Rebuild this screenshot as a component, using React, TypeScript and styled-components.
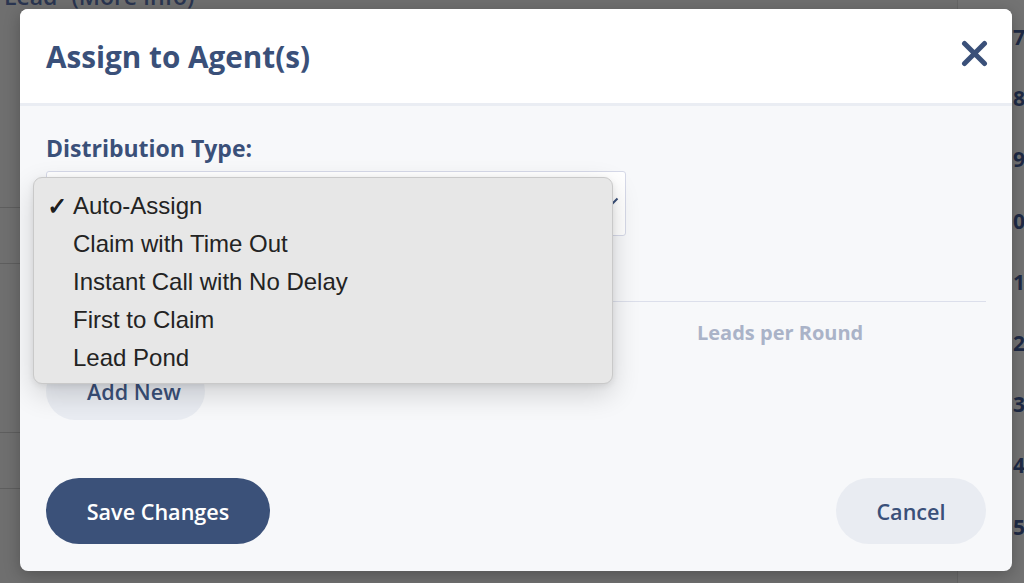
import React from 'react';
import styled, { createGlobalStyle } from 'styled-components';

const NAVY = '#3a5079';

const Global = createGlobalStyle`
  html, body { margin: 0; padding: 0; }
  body {
    width: 1024px;
    height: 583px;
    overflow: hidden;
    background: #6f6f6f;
    font-family: "Open Sans", "Noto Sans", sans-serif;
  }
`;

const Page = styled.div`
  position: relative;
  width: 1024px;
  height: 583px;
  overflow: hidden;
  background: #6f6f6f;
  display: grid;
  grid-template-columns: 957px 67px;
`;

const BgMain = styled.div`
  display: flex;
  flex-direction: column;
`;

const BgTitle = styled.div`
  margin: -20px 0 0 4px;
  height: 24px;
  font-size: 23px;
  font-weight: 600;
  color: #2a3550;
  white-space: nowrap;
  span { margin-left: 14px; }
`;

const BgRow = styled.div<{ $h: number }>`
  height: ${p => p.$h}px;
  border-bottom: 1px solid #5e5e5e;
  width: 20px;
`;

const BgSide = styled.div`
  border-left: 1px solid #666;
  background: #737373;
  display: flex;
  flex-direction: column;
  padding: 24px 0 0 55px;
`;

const BgNum = styled.div`
  height: 61.2px;
  font-size: 21px;
  font-weight: 700;
  color: #1e2a45;
  line-height: 26px;
`;

const Modal = styled.div`
  position: absolute;
  left: 20px;
  top: 9px;
  width: 992px;
  height: 562px;
  border-radius: 8px;
  overflow: hidden;
  background: #f7f8fa;
  box-shadow: 0 4px 16px rgba(0, 0, 0, 0.25);
  display: flex;
  flex-direction: column;
`;

const Header = styled.div`
  height: 94px;
  flex: none;
  background: #ffffff;
  border-bottom: 3px solid #eaedf3;
  display: flex;
  align-items: center;
  justify-content: space-between;
  padding: 0 24px 0 26px;
`;

const Title = styled.h2`
  margin: 0;
  font-size: 29.7px;
  font-weight: 700;
  color: ${NAVY};
`;

const CloseButton = styled.button`
  border: none;
  background: none;
  padding: 0;
  width: 27px;
  height: 27px;
  display: flex;
  align-items: center;
  justify-content: center;
  margin-top: -6px;
`;

const Body = styled.div`
  flex: 1;
  display: flex;
  flex-direction: column;
  padding: 28px 26px 27px;
`;

const Label = styled.div`
  font-size: 23px;
  font-weight: 700;
  line-height: 28px;
  color: ${NAVY};
`;

const SelectBox = styled.div`
  position: relative;
  margin-top: 9px;
  width: 580px;
  height: 65px;
  box-sizing: border-box;
  border: 1px solid #d6d9e8;
  border-radius: 3px;
  background: #ffffff;
`;

const Chevron = styled.svg`
  position: absolute;
  right: 6px;
  top: 25px;
`;

const Menu = styled.ul`
  position: absolute;
  left: -14px;
  top: 5px;
  width: 580px;
  height: 207px;
  box-sizing: border-box;
  margin: 0;
  padding: 9px 0 0;
  list-style: none;
  background: #e7e7e7;
  border: 1px solid #c9c9c9;
  border-radius: 9px;
  box-shadow: 0 10px 28px rgba(0, 0, 0, 0.16), 0 2px 6px rgba(0, 0, 0, 0.08);
  z-index: 5;
`;

const MenuItem = styled.li`
  position: relative;
  height: 38px;
  line-height: 38px;
  padding-left: 39px;
  font-family: "Liberation Sans", Arial, sans-serif;
  font-size: 24px;
  color: #232323;
  white-space: nowrap;
`;

const Check = styled.span`
  position: absolute;
  left: 13px;
  top: 0;
  font-family: "DejaVu Sans", sans-serif;
  font-size: 24px;
  color: #1f1f1f;
  text-shadow: 0.7px 0 0 #1f1f1f, 0 0.5px 0 #1f1f1f;
`;

const Divider = styled.div`
  margin-top: 65px;
  height: 1px;
  background: #dcdfeb;
`;

const TableHead = styled.div`
  display: grid;
  grid-template-columns: 651px 1fr;
  height: 60px;
  align-items: center;
`;

const HeadCell = styled.div`
  font-size: 20px;
  font-weight: 700;
  color: #aab3c8;
  margin-top: 1px;
`;

const Spacer = styled.div`
  flex: 1;
`;

const Footer = styled.div`
  display: flex;
  justify-content: space-between;
  align-items: center;
`;

const PillButton = styled.button<{ $primary?: boolean; $w: number; $h: number; $pl?: number }>`
  width: ${p => p.$w}px;
  height: ${p => p.$h}px;
  border: none;
  border-radius: ${p => p.$h / 2}px;
  background: ${p => (p.$primary ? '#3b5179' : '#e9ecf2')};
  color: ${p => (p.$primary ? '#ffffff' : NAVY)};
  font-family: "Open Sans", sans-serif;
  font-size: 21.6px;
  font-weight: 600;
  padding: 0 0 0 ${p => p.$pl ?? 0}px;
  display: flex;
  align-items: center;
  justify-content: ${p => (p.$pl ? 'flex-start' : 'center')};
`;

const options = [
  'Auto-Assign',
  'Claim with Time Out',
  'Instant Call with No Delay',
  'First to Claim',
  'Lead Pond',
];

export default function App() {
  return (
    <>
      <Global />
      <Page>
        <BgMain>
          <BgTitle>
            Lead<span>(More Info)</span>
          </BgTitle>
          <BgRow $h={203} />
          <BgRow $h={55} />
          <BgRow $h={168} />
          <BgRow $h={55} />
        </BgMain>
        <BgSide>
          {['7', '8', '9', '0', '1', '2', '3', '4', '5'].map(n => (
            <BgNum key={n}>{n}</BgNum>
          ))}
        </BgSide>

        <Modal>
          <Header>
            <Title>Assign to Agent(s)</Title>
            <CloseButton aria-label="Close">
              <svg width="27" height="27" viewBox="0 0 27 27">
                <path
                  d="M3.5 3.5 L23.5 23.5 M23.5 3.5 L3.5 23.5"
                  stroke={NAVY}
                  strokeWidth="5"
                  strokeLinecap="round"
                />
              </svg>
            </CloseButton>
          </Header>
          <Body>
            <Label>Distribution Type:</Label>
            <SelectBox>
              <Chevron width="14" height="9" viewBox="0 0 14 9">
                <path d="M1.5 1.5 L7 7 L12.5 1.5" stroke={NAVY} strokeWidth="2" fill="none" />
              </Chevron>
              <Menu>
                {options.map((o, i) => (
                  <MenuItem key={o}>
                    {i === 0 && <Check>✓</Check>}
                    {o}
                  </MenuItem>
                ))}
              </Menu>
            </SelectBox>
            <Divider />
            <TableHead>
              <div />
              <HeadCell>Leads per Round</HeadCell>
            </TableHead>
            <PillButton $w={159} $h={58} $pl={41}>Add New</PillButton>
            <Spacer />
            <Footer>
              <PillButton $primary $w={224} $h={66}>Save Changes</PillButton>
              <PillButton $w={150} $h={66}>Cancel</PillButton>
            </Footer>
          </Body>
        </Modal>
      </Page>
    </>
  );
}
